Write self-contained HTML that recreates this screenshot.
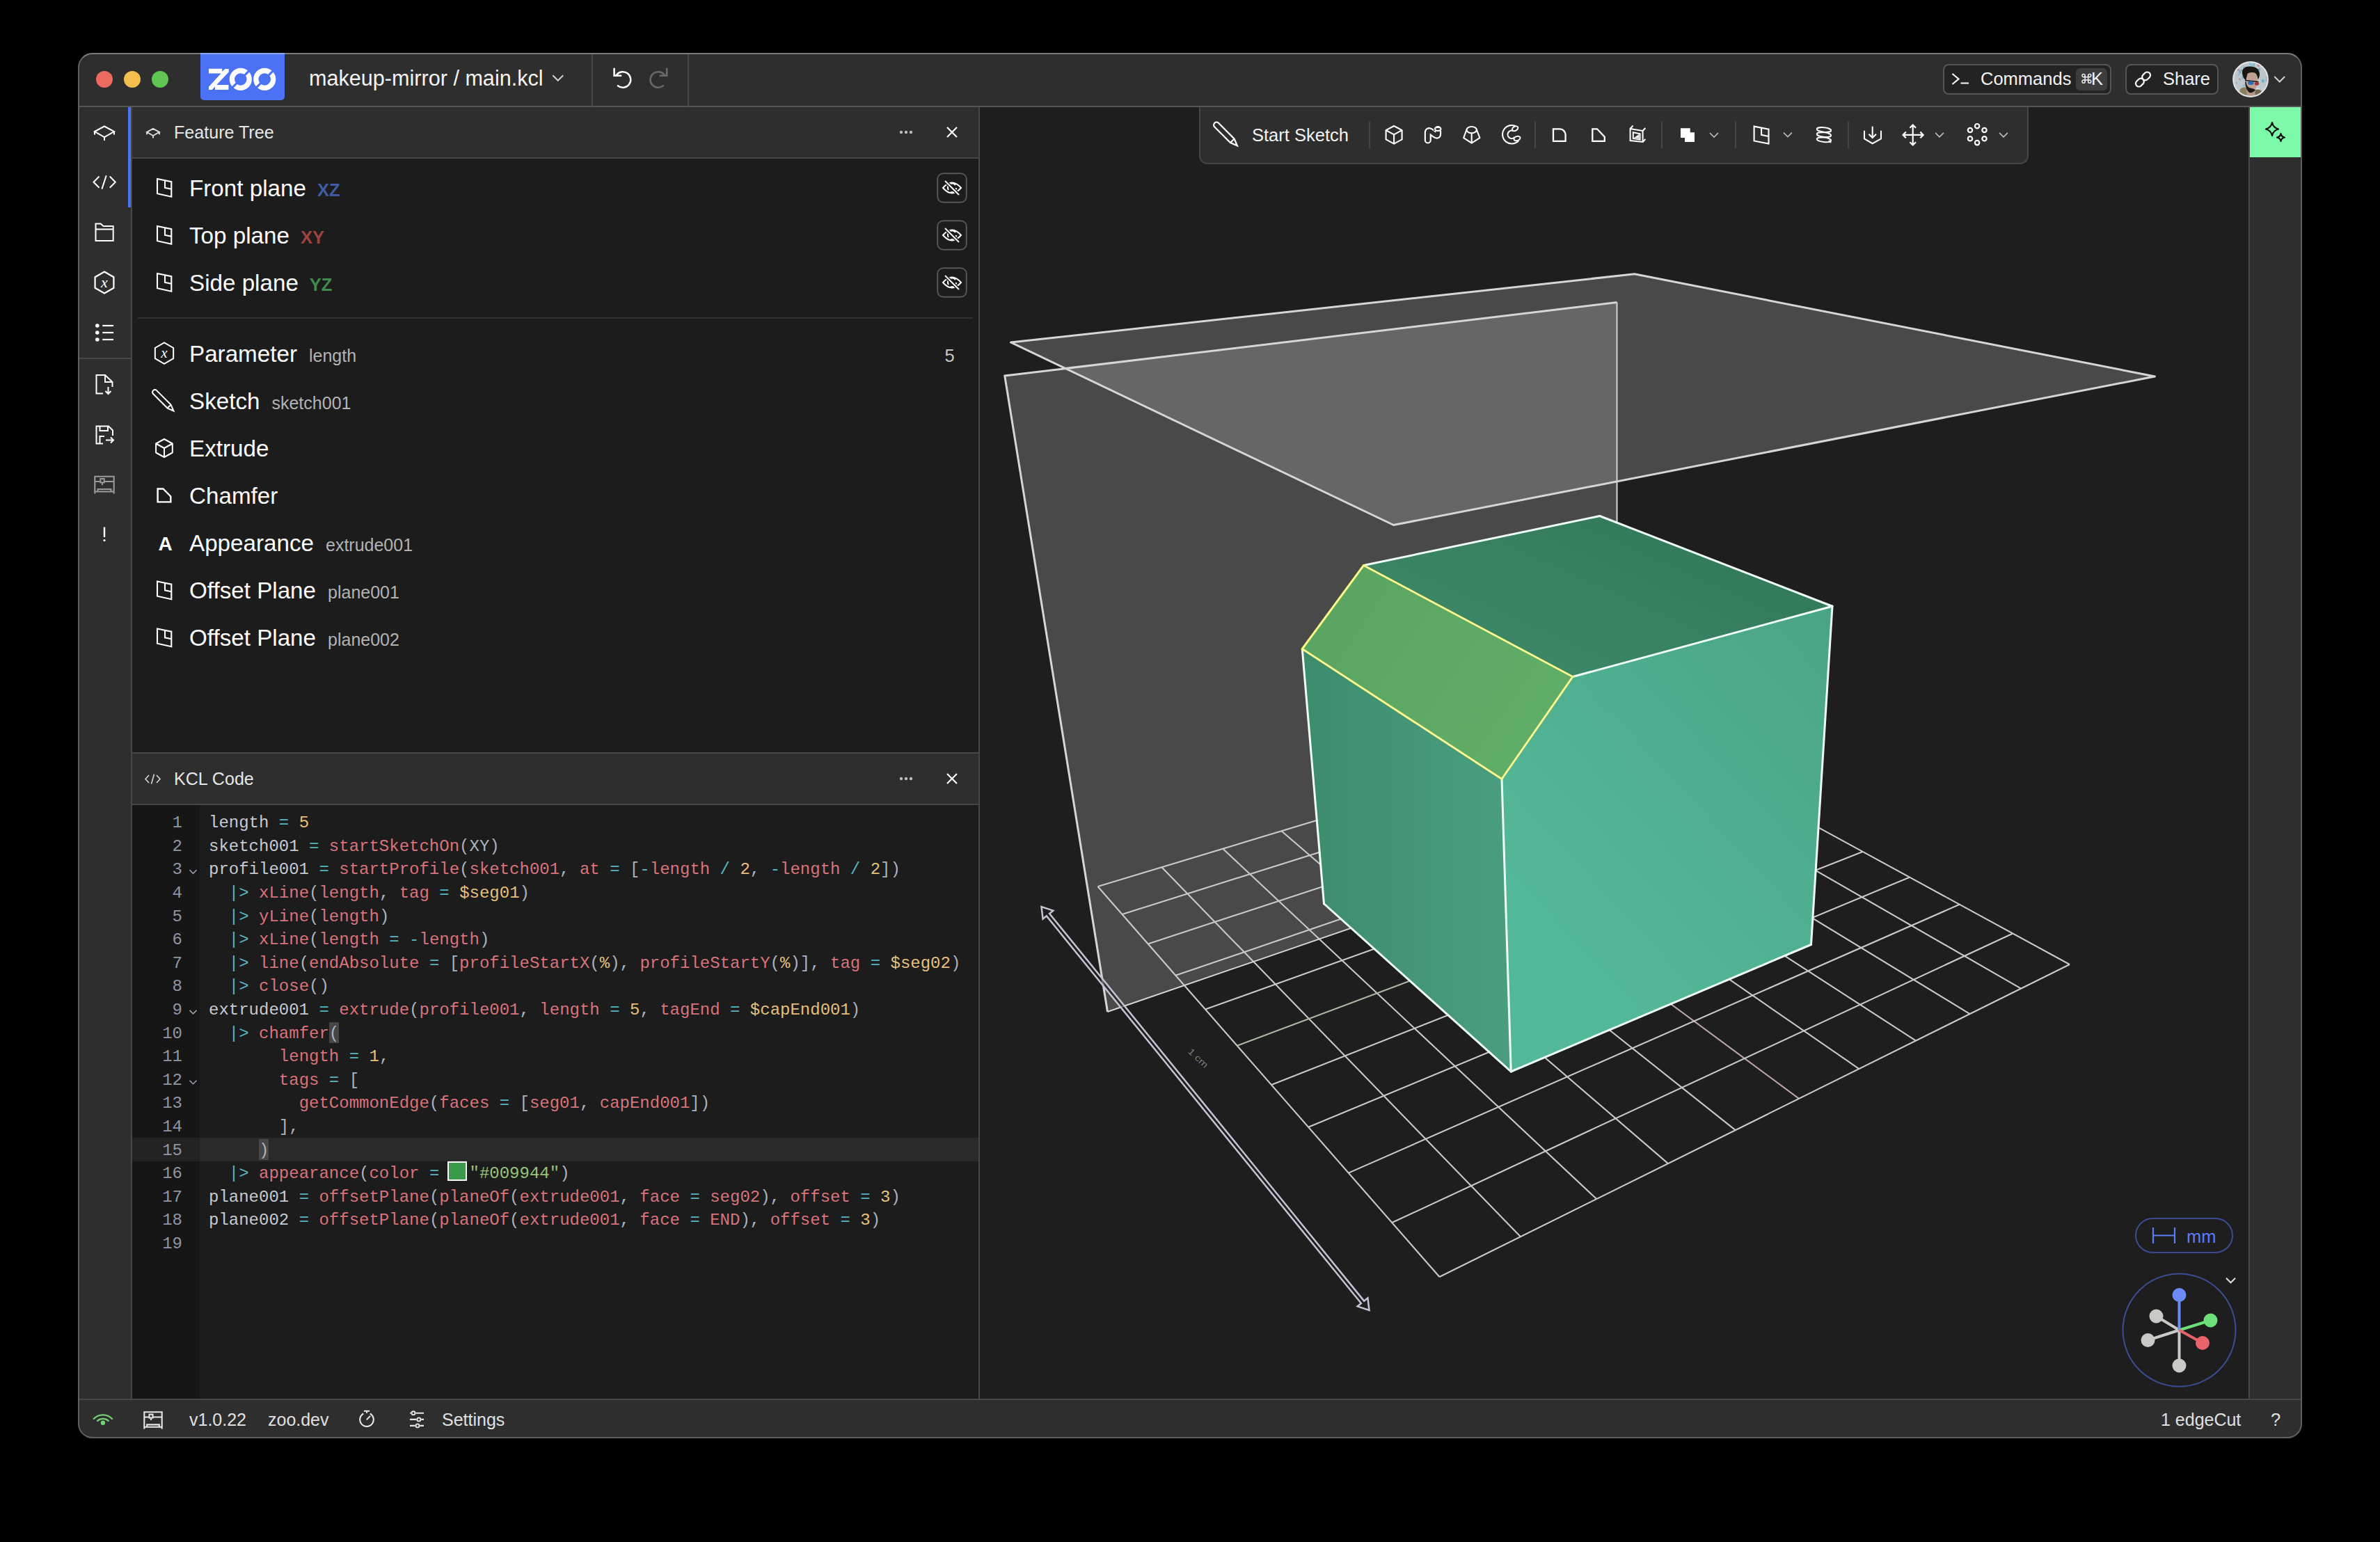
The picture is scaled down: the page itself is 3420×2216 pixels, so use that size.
<!DOCTYPE html><html><head><meta charset="utf-8"><style>
*{margin:0;padding:0;box-sizing:border-box}
html,body{width:3420px;height:2216px;background:#000;overflow:hidden}
body{position:relative;font-family:"Liberation Sans",sans-serif}
.t{position:absolute;white-space:pre}
.r{position:absolute}
svg{position:absolute;overflow:visible}
.ic{fill:none;stroke:#fff;stroke-width:2;stroke-linecap:butt;stroke-linejoin:miter}
</style></head><body><div class="r" style="left:112px;top:76px;width:3196px;height:1991px;border-radius:21px;overflow:hidden;background:#2e2e2e">
<div class="r" style="left:-112px;top:-76px;width:3420px;height:2216px">
<div class="r" style="left:112px;top:76px;width:3196px;height:77px;background:#2e2e2e;"></div>
<div class="r" style="left:112px;top:152px;width:3196px;height:2px;background:#555555;"></div>
<div class="r" style="left:138px;top:101.75px;width:24px;height:24px;border-radius:50%;background:#ec6a5e"></div>
<div class="r" style="left:178px;top:101.75px;width:24px;height:24px;border-radius:50%;background:#f4bf4f"></div>
<div class="r" style="left:218px;top:101.75px;width:24px;height:24px;border-radius:50%;background:#61c554"></div>
<div class="r" style="left:288px;top:76px;width:121px;height:68px;background:#4b71f5;border-radius:0 0 5px 5px"></div>
<svg style="left:0px;top:0px;width:3420px;height:2216px" width="3420" height="2216" viewBox="0 0 3420 2216"><polygon points="299.94,98.68 319.15,98.68 319.15,102.68 323.69,98.95 328.76,98.95 328.76,103.48 311.15,121.89 328.49,121.89 328.49,129.09 309.01,129.09 309.01,124.56 304.74,129.09 299.94,129.09 299.94,124.83 317.55,105.62 299.94,105.62" fill="#fcfcfc"/><circle cx="345.8" cy="113.9" r="12.4" fill="none" stroke="#fcfcfc" stroke-width="7.3"/><line x1="358.8" y1="100.9" x2="332.8" y2="126.9" stroke="#4b71f5" stroke-width="3"/><circle cx="380.25" cy="113.9" r="12.4" fill="none" stroke="#fcfcfc" stroke-width="7.3"/><line x1="393.25" y1="100.9" x2="367.25" y2="126.9" stroke="#4b71f5" stroke-width="3"/></svg>
<div class="t" style="left:444.00px;top:97.00px;font-size:30.6px;line-height:30.6px;color:#f4f4f4;">makeup-mirror / main.kcl</div>
<svg style="left:0px;top:0px;" width="10" height="10" viewBox="0 0 10 10"><polyline points="794.25,108.25 801.75,115.75 809.25,108.25" fill="none" stroke="#d0d0d0" stroke-width="2"/></svg>
<div class="r" style="left:850px;top:76px;width:2px;height:77px;background:#474747;"></div>
<div class="r" style="left:988px;top:76px;width:2px;height:77px;background:#474747;"></div>
<svg style="left:0px;top:0px;" width="10" height="10" viewBox="0 0 10 10"><path d="M882.6,97.8 L882.6,108.8 L893.2,108.8" fill="none" stroke="#fff" stroke-width="2.6"/><path d="M885.96,107.72 A11.3 11.3 0 1 1 887.89,123.28" fill="none" stroke="#fff" stroke-width="2.4" stroke-linecap="round"/><path d="M958.2,97.8 L958.2,108.8 L947.6,108.8" fill="none" stroke="#6a6a6a" stroke-width="2.6"/><path d="M954.84,107.72 A11.3 11.3 0 1 0 952.91,123.28" fill="none" stroke="#6a6a6a" stroke-width="2.4" stroke-linecap="round"/></svg>
<div class="r" style="left:2792px;top:92px;width:242px;height:44px;background:#232323;border:2px solid #555;border-radius:8px"></div>
<svg style="left:0px;top:0px;" width="10" height="10" viewBox="0 0 10 10"><polyline points="2805.5,106 2814.5,113.5 2805.5,121" fill="none" stroke="#fff" stroke-width="2.2"/><line x1="2817.5" y1="119.5" x2="2829" y2="119.5" stroke="#fff" stroke-width="2.2"/></svg>
<div class="t" style="left:2846.00px;top:101.31px;font-size:25.5px;line-height:25.5px;color:#f2f2f2;">Commands</div>
<div class="r" style="left:2983px;top:98px;width:45px;height:32px;background:#3d3d3d;border-radius:6px"></div>
<svg style="left:0px;top:0px;" width="10" height="10" viewBox="0 0 10 10"><path d="M2994.1000000000004,110.7 L3002.7,110.7 M2994.1000000000004,115.10000000000001 L3002.7,115.10000000000001 M2996.2000000000003,108.60000000000001 L2996.2000000000003,117.2 M3000.6,108.60000000000001 L3000.6,117.2" stroke="#e8e8e8" stroke-width="1.5" fill="none"/><circle cx="2994.10" cy="108.60" r="2.1" stroke="#e8e8e8" stroke-width="1.5" fill="none"/><circle cx="2994.10" cy="117.20" r="2.1" stroke="#e8e8e8" stroke-width="1.5" fill="none"/><circle cx="3002.70" cy="108.60" r="2.1" stroke="#e8e8e8" stroke-width="1.5" fill="none"/><circle cx="3002.70" cy="117.20" r="2.1" stroke="#e8e8e8" stroke-width="1.5" fill="none"/></svg>
<div class="t" style="left:3005.00px;top:101.31px;font-size:25.5px;line-height:25.5px;color:#f2f2f2;">K</div>
<div class="r" style="left:3054px;top:92px;width:134px;height:44px;background:#232323;border:2px solid #555;border-radius:8px"></div>
<svg style="left:0px;top:0px;" width="10" height="10" viewBox="0 0 10 10"><g transform="translate(3079.5,114) rotate(-45)" fill="none" stroke="#fff" stroke-width="2.2"><rect x="-13" y="-4.5" width="13" height="9" rx="4.5"/><rect x="0" y="-4.5" width="13" height="9" rx="4.5"/></g></svg>
<div class="t" style="left:3108.00px;top:101.31px;font-size:25.5px;line-height:25.5px;color:#f2f2f2;">Share</div>
<svg style="left:0px;top:0px;" width="10" height="10" viewBox="0 0 10 10"><defs><clipPath id="avc"><circle cx="3234" cy="114" r="24.8"/></clipPath></defs><g clip-path="url(#avc)"><rect x="3208" y="88" width="52" height="52" fill="#bcc6cd"/><rect x="3224.8" y="95.8" width="1.6" height="4.0" fill="#c46a6a" opacity="0.85"/><rect x="3212.9" y="118.3" width="2.1" height="1.8" fill="#9aa8b4" opacity="0.85"/><rect x="3229.7" y="100.5" width="2.8" height="4.0" fill="#9aa8b4" opacity="0.85"/><rect x="3214.4" y="99.6" width="3.2" height="1.7" fill="#c46a6a" opacity="0.85"/><rect x="3238.4" y="90.6" width="1.6" height="4.1" fill="#5aaac4" opacity="0.85"/><rect x="3223.1" y="95.5" width="3.2" height="3.2" fill="#76c0d4" opacity="0.85"/><rect x="3243.5" y="93.4" width="3.4" height="2.6" fill="#9aa8b4" opacity="0.85"/><rect x="3236.5" y="91.3" width="3.4" height="3.0" fill="#76c0d4" opacity="0.85"/><rect x="3235.6" y="128.4" width="3.3" height="2.9" fill="#e6eaee" opacity="0.85"/><rect x="3223.6" y="129.3" width="3.8" height="1.7" fill="#c46a6a" opacity="0.85"/><rect x="3223.6" y="113.7" width="3.7" height="2.4" fill="#c8d0d6" opacity="0.85"/><rect x="3259.0" y="94.1" width="2.0" height="2.5" fill="#e6eaee" opacity="0.85"/><rect x="3256.5" y="109.9" width="1.7" height="3.2" fill="#c46a6a" opacity="0.85"/><rect x="3249.0" y="130.6" width="3.6" height="3.3" fill="#c8d0d6" opacity="0.85"/><rect x="3238.2" y="111.7" width="1.8" height="2.3" fill="#7fc6d8" opacity="0.85"/><rect x="3244.2" y="91.4" width="3.6" height="3.4" fill="#c46a6a" opacity="0.85"/><rect x="3259.6" y="130.7" width="3.6" height="4.2" fill="#c8d0d6" opacity="0.85"/><rect x="3226.0" y="136.9" width="2.0" height="1.9" fill="#c8d0d6" opacity="0.85"/><rect x="3211.1" y="127.9" width="3.7" height="2.7" fill="#5aaac4" opacity="0.85"/><rect x="3255.7" y="113.8" width="2.8" height="3.1" fill="#5aaac4" opacity="0.85"/><rect x="3253.9" y="130.6" width="3.2" height="3.6" fill="#7fc6d8" opacity="0.85"/><rect x="3259.3" y="123.5" width="4.4" height="2.0" fill="#e6eaee" opacity="0.85"/><rect x="3217.2" y="100.1" width="1.5" height="4.0" fill="#5aaac4" opacity="0.85"/><rect x="3217.5" y="102.7" width="2.8" height="2.6" fill="#5aaac4" opacity="0.85"/><rect x="3237.4" y="137.6" width="4.1" height="4.4" fill="#c46a6a" opacity="0.85"/><rect x="3242.1" y="126.5" width="4.2" height="3.8" fill="#e6eaee" opacity="0.85"/><rect x="3253.5" y="129.5" width="2.7" height="2.7" fill="#e6eaee" opacity="0.85"/><rect x="3233.0" y="108.8" width="1.7" height="2.1" fill="#5aaac4" opacity="0.85"/><rect x="3216.4" y="105.7" width="1.8" height="3.2" fill="#76c0d4" opacity="0.85"/><rect x="3235.9" y="137.3" width="1.6" height="4.1" fill="#9aa8b4" opacity="0.85"/><rect x="3239.9" y="95.7" width="4.4" height="3.3" fill="#c8d0d6" opacity="0.85"/><rect x="3232.7" y="94.0" width="4.5" height="2.9" fill="#e6eaee" opacity="0.85"/><rect x="3233.2" y="92.5" width="3.7" height="3.7" fill="#76c0d4" opacity="0.85"/><rect x="3232.9" y="124.0" width="1.6" height="4.4" fill="#9aa8b4" opacity="0.85"/><rect x="3235.5" y="95.6" width="4.2" height="3.8" fill="#9aa8b4" opacity="0.85"/><rect x="3223.5" y="121.4" width="3.6" height="2.3" fill="#76c0d4" opacity="0.85"/><rect x="3227.1" y="96.7" width="2.2" height="3.1" fill="#7fc6d8" opacity="0.85"/><rect x="3234.1" y="121.1" width="3.9" height="4.5" fill="#9aa8b4" opacity="0.85"/><rect x="3252.3" y="129.9" width="2.7" height="3.9" fill="#7fc6d8" opacity="0.85"/><rect x="3218.4" y="113.6" width="1.6" height="1.6" fill="#c46a6a" opacity="0.85"/><rect x="3222.5" y="101.5" width="3.3" height="2.5" fill="#c46a6a" opacity="0.85"/><rect x="3250.0" y="125.6" width="4.4" height="2.6" fill="#c8d0d6" opacity="0.85"/><rect x="3219.5" y="99.8" width="2.5" height="2.9" fill="#5aaac4" opacity="0.85"/><rect x="3259.2" y="119.7" width="2.9" height="3.5" fill="#76c0d4" opacity="0.85"/><rect x="3249.6" y="92.4" width="1.9" height="2.7" fill="#c46a6a" opacity="0.85"/><rect x="3245.0" y="98.4" width="2.8" height="3.4" fill="#5aaac4" opacity="0.85"/><rect x="3212.5" y="137.2" width="2.7" height="2.7" fill="#c46a6a" opacity="0.85"/><rect x="3257.2" y="125.7" width="4.5" height="1.6" fill="#5aaac4" opacity="0.85"/><rect x="3238.7" y="112.2" width="1.9" height="4.0" fill="#c46a6a" opacity="0.85"/><rect x="3259.0" y="122.2" width="2.0" height="3.1" fill="#c8d0d6" opacity="0.85"/><rect x="3209.1" y="129.6" width="3.4" height="3.1" fill="#c46a6a" opacity="0.85"/><rect x="3256.5" y="110.6" width="2.1" height="4.1" fill="#7fc6d8" opacity="0.85"/><rect x="3209.5" y="99.1" width="2.2" height="3.3" fill="#9aa8b4" opacity="0.85"/><rect x="3221.5" y="109.8" width="1.7" height="3.7" fill="#5aaac4" opacity="0.85"/><rect x="3254.7" y="122.4" width="4.2" height="2.8" fill="#7fc6d8" opacity="0.85"/><rect x="3255.7" y="114.1" width="2.0" height="3.0" fill="#9aa8b4" opacity="0.85"/><rect x="3253.4" y="128.4" width="1.5" height="3.9" fill="#9aa8b4" opacity="0.85"/><rect x="3217.0" y="112.6" width="1.9" height="1.7" fill="#c46a6a" opacity="0.85"/><rect x="3243.5" y="115.6" width="3.9" height="1.8" fill="#e6eaee" opacity="0.85"/><rect x="3237.1" y="100.9" width="1.6" height="1.8" fill="#c8d0d6" opacity="0.85"/><rect x="3231.5" y="89.4" width="2.8" height="3.3" fill="#76c0d4" opacity="0.85"/><rect x="3234.3" y="114.6" width="2.3" height="3.0" fill="#c46a6a" opacity="0.85"/><rect x="3250.0" y="114.4" width="3.6" height="4.1" fill="#5aaac4" opacity="0.85"/><rect x="3257.0" y="101.5" width="4.2" height="2.1" fill="#9aa8b4" opacity="0.85"/><rect x="3231.3" y="109.7" width="2.8" height="1.7" fill="#e6eaee" opacity="0.85"/><rect x="3220.5" y="91.8" width="2.4" height="1.9" fill="#c46a6a" opacity="0.85"/><rect x="3248.4" y="136.9" width="3.5" height="1.9" fill="#c46a6a" opacity="0.85"/><rect x="3253.9" y="138.3" width="3.7" height="1.8" fill="#5aaac4" opacity="0.85"/><rect x="3254.0" y="96.5" width="4.0" height="2.0" fill="#c46a6a" opacity="0.85"/><rect x="3230.4" y="114.8" width="2.8" height="2.6" fill="#c8d0d6" opacity="0.85"/><path d="M3216,141 L3219,128 Q3224,124 3228,126 L3231,140 Z" fill="#8a8060"/><path d="M3238,140 L3241,129 Q3247,127 3251,132 L3254,141 Z" fill="#6f6a4c"/><path d="M3228,126 Q3234,131 3240,128 L3241,140 L3229,140 Z" fill="#b79888"/><path d="M3227,108 Q3228,100 3235,100 Q3243,101 3244,109 L3243.5,120 Q3242,131 3235,132 Q3228,131 3227,121 Z" fill="#c0a091"/><path d="M3222,106 Q3221,96 3232,95.5 Q3246,95 3247,106 Q3247,112 3244.5,114 Q3244,107 3240,104.5 Q3233,103 3229.5,106 Q3228,111 3227.5,116 Q3223,112 3222,106 Z" fill="#1a1614"/><path d="M3226,117 Q3226.5,128 3232,133 Q3237,134.5 3241,129 Q3238,127 3234,126.5 Q3229,126 3227.5,118 Z" fill="#1e1915"/><path d="M3226,115.5 L3245.5,117.5" stroke="#221c18" stroke-width="1.6"/><ellipse cx="3234.3" cy="119.3" rx="4.3" ry="2.7" fill="#2a6db8"/><ellipse cx="3243" cy="120.2" rx="3.2" ry="2.5" fill="#a8343a"/></g><circle cx="3234" cy="114" r="24.8" fill="none" stroke="#e0e2e4" stroke-width="2.2"/></svg>
<svg style="left:0px;top:0px;" width="10" height="10" viewBox="0 0 10 10"><polyline points="3268.25,110.0 3275.75,117.5 3283.25,110.0" fill="none" stroke="#d0d0d0" stroke-width="2"/></svg>
<div class="r" style="left:112px;top:154px;width:72px;height:1856px;background:#2e2e2e;"></div>
<div class="r" style="left:184px;top:154px;width:4px;height:144px;background:#4b71f5;"></div>
<div class="r" style="left:188px;top:154px;width:2px;height:1856px;background:#474747;"></div>
<div class="r" style="left:112px;top:514px;width:76px;height:2px;background:#474747;"></div>
<div class="r" style="left:190px;top:154px;width:1216px;height:73px;background:#2e2e2e;"></div>
<div class="r" style="left:190px;top:226px;width:1216px;height:2px;background:#474747;"></div>
<div class="r" style="left:190px;top:228px;width:1216px;height:853px;background:#1c1c1c;"></div>
<div class="r" style="left:198px;top:456px;width:1200px;height:2px;background:#333333;"></div>
<div class="r" style="left:1406px;top:154px;width:2px;height:1856px;background:#474747;"></div>
<div class="r" style="left:190px;top:1081px;width:1216px;height:2px;background:#474747;"></div>
<div class="r" style="left:190px;top:1083px;width:1216px;height:72px;background:#2e2e2e;"></div>
<div class="r" style="left:190px;top:1155px;width:1216px;height:2px;background:#474747;"></div>
<div class="r" style="left:190px;top:1157px;width:1216px;height:853px;background:#1c1c1c;"></div>
<div class="r" style="left:190px;top:1157px;width:97px;height:853px;background:#161616;"></div>
<div class="r" style="left:1408px;top:154px;width:1823px;height:1856px;background:#1e1e1e;"></div>
<div class="r" style="left:3231px;top:154px;width:2px;height:1856px;background:#474747;"></div>
<div class="r" style="left:3233px;top:154px;width:75px;height:1856px;background:#2e2e2e;"></div>
<div class="r" style="left:3233px;top:154px;width:75px;height:72px;background:#7cfaaa;"></div>
<div class="r" style="left:112px;top:2010px;width:3196px;height:2px;background:#474747;"></div>
<div class="r" style="left:112px;top:2012px;width:3196px;height:55px;background:#2e2e2e;"></div>
<svg style="left:0px;top:0px;" width="10" height="10" viewBox="0 0 10 10"><path d="M136,189 L150,181.5 L164,189 L150,197 Z M136,189 L136,193.5 M164,189 L164,193.5 M150,197 L150,202" class="ic" stroke-width="2.4"/><path d="M142.5,253.5 L134.5,261.7 L142.5,269.8 M157.8,253.5 L165.8,261.7 L157.8,269.8 M152.8,252.2 L146.4,271.6" class="ic" stroke-width="2.4"/><path d="M137.5,346 L137.5,321.5 L144.7,321.5 L148.5,325 L162.7,325 L162.7,346 Z M137.5,329.5 L162.7,329.5" class="ic" stroke-width="2.2"/><polygon points="150.00,390.50 163.42,398.25 163.42,413.75 150.00,421.50 136.58,413.75 136.58,398.25" fill="none" stroke="#fff" stroke-width="2.2"/><text x="150" y="413" font-family="Liberation Serif" font-style="italic" font-size="22" fill="#fff" text-anchor="middle">x</text><circle cx="139.8" cy="468" r="2.8" fill="#fff"/><line x1="147.3" y1="468" x2="163.1" y2="468" stroke="#fff" stroke-width="2.2"/><circle cx="139.8" cy="478" r="2.8" fill="#fff"/><line x1="147.3" y1="478" x2="163.1" y2="478" stroke="#fff" stroke-width="2.2"/><circle cx="139.8" cy="488" r="2.8" fill="#fff"/><line x1="147.3" y1="488" x2="163.1" y2="488" stroke="#fff" stroke-width="2.2"/><path d="M148,565.5 L138.5,565.5 L138.5,539 L151,539 L161.5,549 L161.5,556 M151,539 L151,549 L161.5,549 M155.5,556 L155.5,566 M151.5,562 L155.5,566 L159.5,562" class="ic" stroke-width="2.2"/><path d="M148,637.5 L138.5,637.5 L138.5,612.5 L156,612.5 L162,618.5 L162,626 M143.5,612.5 L143.5,619 L155,619 L155,612.5 M143.5,637.5 L143.5,627 L150,627 M152,632.5 L163,632.5 M159,628.5 L163,632.5 L159,636.5" class="ic" stroke-width="2.2"/><path d="M136.3,709.5 L136.3,684.8 L163.7,684.8 L163.7,709.5 M136.3,692 L163.7,692 M136.3,706.5 L163.7,706.5 M140.5,706.5 L140.5,703 L159.5,703 L159.5,706.5 M147,694 L147,697" fill="none" stroke="#9a9a9a" stroke-width="2.1"/><rect x="144.3" y="688" width="5.4" height="5.4" fill="#2e2e2e" stroke="#9a9a9a" stroke-width="2"/><line x1="150" y1="757.5" x2="150" y2="772" stroke="#fff" stroke-width="2.4"/><circle cx="150" cy="776.5" r="1.6" fill="#fff"/></svg>
<div class="t" style="left:250.00px;top:177.91px;font-size:25.09px;line-height:25.09px;color:#e6e6e6;">Feature Tree</div>
<div class="t" style="left:250.00px;top:1107.16px;font-size:25.09px;line-height:25.09px;color:#e6e6e6;">KCL Code</div>
<div class="t" style="left:272px;top:253.75px;font-size:33.2px;line-height:33.2px;color:#fff">Front plane<span style="font-size:25.5px;color:#3f5ca3;font-weight:bold;margin-left:16px">XZ</span></div>
<div class="t" style="left:272px;top:321.75px;font-size:33.2px;line-height:33.2px;color:#fff">Top plane<span style="font-size:25.5px;color:#a04040;font-weight:bold;margin-left:16px">XY</span></div>
<div class="t" style="left:272px;top:389.75px;font-size:33.2px;line-height:33.2px;color:#fff">Side plane<span style="font-size:25.5px;color:#3f8a4c;font-weight:bold;margin-left:16px">YZ</span></div>
<div class="t" style="left:272px;top:492.00px;font-size:33.2px;line-height:33.2px;color:#fff">Parameter<span style="font-size:25px;color:#b3b3b3;margin-left:17px">length</span></div>
<div class="t" style="left:272px;top:560.00px;font-size:33.2px;line-height:33.2px;color:#fff">Sketch<span style="font-size:25px;color:#b3b3b3;margin-left:17px">sketch001</span></div>
<div class="t" style="left:272px;top:628.00px;font-size:33.2px;line-height:33.2px;color:#fff">Extrude</div>
<div class="t" style="left:272px;top:695.50px;font-size:33.2px;line-height:33.2px;color:#fff">Chamfer</div>
<div class="t" style="left:272px;top:764.00px;font-size:33.2px;line-height:33.2px;color:#fff">Appearance<span style="font-size:25px;color:#b3b3b3;margin-left:17px">extrude001</span></div>
<div class="t" style="left:272px;top:832.00px;font-size:33.2px;line-height:33.2px;color:#fff">Offset Plane<span style="font-size:25px;color:#b3b3b3;margin-left:17px">plane001</span></div>
<div class="t" style="left:272px;top:900.00px;font-size:33.2px;line-height:33.2px;color:#fff">Offset Plane<span style="font-size:25px;color:#b3b3b3;margin-left:17px">plane002</span></div>
<div class="t" style="left:227.50px;top:767.56px;font-size:28.05px;line-height:28.05px;color:#fff;font-weight:bold">A</div>
<div class="t" style="left:1357.50px;top:498.81px;font-size:25.5px;line-height:25.5px;color:#c8c8c8;">5</div>
<svg style="left:0px;top:0px;" width="10" height="10" viewBox="0 0 10 10"><path d="M211,189.8 L220,184.8 L229,189.8 L220,195 Z M211,189.8 L211,193.2 M229,189.8 L229,193.2 M220,195 L220,198.5" fill="none" stroke="#dcdcdc" stroke-width="1.9"/><circle cx="1295" cy="190" r="2.2" fill="#bdbdbd"/><circle cx="1302" cy="190" r="2.2" fill="#bdbdbd"/><circle cx="1309" cy="190" r="2.2" fill="#bdbdbd"/><path d="M1361,183 L1375,197 M1375,183 L1361,197" stroke="#fff" stroke-width="2.2"/><path d="M214,1114 L209,1119.5 L214,1125 M225,1114 L230,1119.5 L225,1125 M221.5,1112.5 L217.5,1126.5" fill="none" stroke="#d8d8d8" stroke-width="1.6"/><circle cx="1295" cy="1119" r="2.2" fill="#bdbdbd"/><circle cx="1302" cy="1119" r="2.2" fill="#bdbdbd"/><circle cx="1309" cy="1119" r="2.2" fill="#bdbdbd"/><path d="M1361,1112 L1375,1126 M1375,1112 L1361,1126" stroke="#fff" stroke-width="2.2"/><path d="M226,257 L246.3,261.2 L246.3,282.7 L226,278.2 Z M237,259.3 L237,269.8 L246.3,271.7" fill="none" stroke="#fff" stroke-width="2.1" stroke-linejoin="miter"/><rect x="1347.25" y="249.25" width="41.5" height="41.5" rx="8" fill="none" stroke="#555" stroke-width="2"/><path d="M1355,270 Q1368,255 1381,270 Q1368,285 1355,270 Z" fill="none" stroke="#fff" stroke-width="2"/><path d="M1363,273 A6 6 0 0 1 1373,266" fill="none" stroke="#fff" stroke-width="2"/><path d="M1366,276 A6 6 0 0 0 1374,270" fill="none" stroke="#fff" stroke-width="2"/><line x1="1358" y1="260" x2="1378" y2="280" stroke="#1c1c1c" stroke-width="5"/><line x1="1358" y1="260" x2="1378" y2="280" stroke="#fff" stroke-width="2"/><path d="M226,325 L246.3,329.2 L246.3,350.7 L226,346.2 Z M237,327.3 L237,337.8 L246.3,339.7" fill="none" stroke="#fff" stroke-width="2.1" stroke-linejoin="miter"/><rect x="1347.25" y="317.25" width="41.5" height="41.5" rx="8" fill="none" stroke="#555" stroke-width="2"/><path d="M1355,338 Q1368,323 1381,338 Q1368,353 1355,338 Z" fill="none" stroke="#fff" stroke-width="2"/><path d="M1363,341 A6 6 0 0 1 1373,334" fill="none" stroke="#fff" stroke-width="2"/><path d="M1366,344 A6 6 0 0 0 1374,338" fill="none" stroke="#fff" stroke-width="2"/><line x1="1358" y1="328" x2="1378" y2="348" stroke="#1c1c1c" stroke-width="5"/><line x1="1358" y1="328" x2="1378" y2="348" stroke="#fff" stroke-width="2"/><path d="M226,393 L246.3,397.2 L246.3,418.7 L226,414.2 Z M237,395.3 L237,405.8 L246.3,407.7" fill="none" stroke="#fff" stroke-width="2.1" stroke-linejoin="miter"/><rect x="1347.25" y="385.25" width="41.5" height="41.5" rx="8" fill="none" stroke="#555" stroke-width="2"/><path d="M1355,406 Q1368,391 1381,406 Q1368,421 1355,406 Z" fill="none" stroke="#fff" stroke-width="2"/><path d="M1363,409 A6 6 0 0 1 1373,402" fill="none" stroke="#fff" stroke-width="2"/><path d="M1366,412 A6 6 0 0 0 1374,406" fill="none" stroke="#fff" stroke-width="2"/><line x1="1358" y1="396" x2="1378" y2="416" stroke="#1c1c1c" stroke-width="5"/><line x1="1358" y1="396" x2="1378" y2="416" stroke="#fff" stroke-width="2"/><polygon points="236.00,492.40 249.16,500.00 249.16,515.20 236.00,522.80 222.84,515.20 222.84,500.00" fill="none" stroke="#fff" stroke-width="2"/><text x="236" y="514" font-family="Liberation Serif" font-style="italic" font-size="21" fill="#fff" text-anchor="middle">x</text><g transform="translate(236,577) rotate(45)"><path d="M-19,-3.5 L10,-3.5 L19,0 L10,3.5 L-19,3.5 A3.5 3.5 0 0 1 -19,-3.5 Z M10,-3.5 L10,3.5" fill="none" stroke="#fff" stroke-width="2"/></g><path d="M236,631 L247.8,637.5 L247.8,650.5 L236,657 L224.1,650.5 L224.1,637.5 Z M224.1,637.5 L236,644 L247.8,637.5 M236,644 L236,657" fill="none" stroke="#fff" stroke-width="2" stroke-linejoin="round"/><path d="M226.6,702.5 L234.5,702.5 L245.3,713.5 L245.3,721.4 L226.6,721.4 Z" fill="none" stroke="#fff" stroke-width="2.4"/><path d="M226,835.5 L246.3,839.7 L246.3,861.2 L226,856.7 Z M237,837.8 L237,848.3 L246.3,850.2" fill="none" stroke="#fff" stroke-width="2.1" stroke-linejoin="miter"/><path d="M226,903.5 L246.3,907.7 L246.3,929.2 L226,924.7 Z M237,905.8 L237,916.3 L246.3,918.2" fill="none" stroke="#fff" stroke-width="2.1" stroke-linejoin="miter"/></svg>
<div class="r" style="left:190px;top:1635px;width:97px;height:34px;background:#222222;"></div>
<div class="r" style="left:287px;top:1635px;width:1119px;height:34px;background:#2a2a2a;"></div>
<div class="r" style="left:472.8px;top:1468.5px;width:14.4px;height:30px;background:#464646;"></div>
<div class="r" style="left:372px;top:1636.5px;width:14.4px;height:30px;background:#464646;"></div>
<div class="r" style="left:643px;top:1669px;width:28px;height:28px;background:#3a9a4a;border:2px solid #fff"></div>
<div class="t" style="left:300px;top:1171.10px;font-family:'Liberation Mono', monospace;font-size:24px;line-height:24px"><span style="color:#c5cad3">length</span> <span style="color:#56b6c2">=</span> <span style="color:#e5c07b">5</span></div>
<div class="t" style="left:247.6px;top:1171.10px;font-family:'Liberation Mono', monospace;font-size:24px;line-height:24px;color:#8e95a4">1</div>
<div class="t" style="left:300px;top:1204.70px;font-family:'Liberation Mono', monospace;font-size:24px;line-height:24px"><span style="color:#c5cad3">sketch001</span> <span style="color:#56b6c2">=</span> <span style="color:#d9737b">startSketchOn</span><span style="color:#abb2bf">(</span><span style="color:#abb2bf">XY</span><span style="color:#abb2bf">)</span></div>
<div class="t" style="left:247.6px;top:1204.70px;font-family:'Liberation Mono', monospace;font-size:24px;line-height:24px;color:#8e95a4">2</div>
<div class="t" style="left:300px;top:1238.30px;font-family:'Liberation Mono', monospace;font-size:24px;line-height:24px"><span style="color:#c5cad3">profile001</span> <span style="color:#56b6c2">=</span> <span style="color:#d9737b">startProfile</span><span style="color:#abb2bf">(</span><span style="color:#d9737b">sketch001</span><span style="color:#abb2bf">,</span> <span style="color:#d9737b">at</span> <span style="color:#56b6c2">=</span> <span style="color:#abb2bf">[</span><span style="color:#56b6c2">-</span><span style="color:#d9737b">length</span> <span style="color:#56b6c2">/</span> <span style="color:#e5c07b">2</span><span style="color:#abb2bf">,</span> <span style="color:#56b6c2">-</span><span style="color:#d9737b">length</span> <span style="color:#56b6c2">/</span> <span style="color:#e5c07b">2</span><span style="color:#abb2bf">]</span><span style="color:#abb2bf">)</span></div>
<div class="t" style="left:247.6px;top:1238.30px;font-family:'Liberation Mono', monospace;font-size:24px;line-height:24px;color:#8e95a4">3</div>
<div class="t" style="left:300px;top:1271.90px;font-family:'Liberation Mono', monospace;font-size:24px;line-height:24px">  <span style="color:#56b6c2">|&gt;</span> <span style="color:#d9737b">xLine</span><span style="color:#abb2bf">(</span><span style="color:#d9737b">length</span><span style="color:#abb2bf">,</span> <span style="color:#d9737b">tag</span> <span style="color:#56b6c2">=</span> <span style="color:#e5c07b">$seg01</span><span style="color:#abb2bf">)</span></div>
<div class="t" style="left:247.6px;top:1271.90px;font-family:'Liberation Mono', monospace;font-size:24px;line-height:24px;color:#8e95a4">4</div>
<div class="t" style="left:300px;top:1305.50px;font-family:'Liberation Mono', monospace;font-size:24px;line-height:24px">  <span style="color:#56b6c2">|&gt;</span> <span style="color:#d9737b">yLine</span><span style="color:#abb2bf">(</span><span style="color:#d9737b">length</span><span style="color:#abb2bf">)</span></div>
<div class="t" style="left:247.6px;top:1305.50px;font-family:'Liberation Mono', monospace;font-size:24px;line-height:24px;color:#8e95a4">5</div>
<div class="t" style="left:300px;top:1339.10px;font-family:'Liberation Mono', monospace;font-size:24px;line-height:24px">  <span style="color:#56b6c2">|&gt;</span> <span style="color:#d9737b">xLine</span><span style="color:#abb2bf">(</span><span style="color:#d9737b">length</span> <span style="color:#56b6c2">=</span> <span style="color:#56b6c2">-</span><span style="color:#d9737b">length</span><span style="color:#abb2bf">)</span></div>
<div class="t" style="left:247.6px;top:1339.10px;font-family:'Liberation Mono', monospace;font-size:24px;line-height:24px;color:#8e95a4">6</div>
<div class="t" style="left:300px;top:1372.70px;font-family:'Liberation Mono', monospace;font-size:24px;line-height:24px">  <span style="color:#56b6c2">|&gt;</span> <span style="color:#d9737b">line</span><span style="color:#abb2bf">(</span><span style="color:#d9737b">endAbsolute</span> <span style="color:#56b6c2">=</span> <span style="color:#abb2bf">[</span><span style="color:#d9737b">profileStartX</span><span style="color:#abb2bf">(</span><span style="color:#e5c07b">%</span><span style="color:#abb2bf">)</span><span style="color:#abb2bf">,</span> <span style="color:#d9737b">profileStartY</span><span style="color:#abb2bf">(</span><span style="color:#e5c07b">%</span><span style="color:#abb2bf">)</span><span style="color:#abb2bf">]</span><span style="color:#abb2bf">,</span> <span style="color:#d9737b">tag</span> <span style="color:#56b6c2">=</span> <span style="color:#e5c07b">$seg02</span><span style="color:#abb2bf">)</span></div>
<div class="t" style="left:247.6px;top:1372.70px;font-family:'Liberation Mono', monospace;font-size:24px;line-height:24px;color:#8e95a4">7</div>
<div class="t" style="left:300px;top:1406.30px;font-family:'Liberation Mono', monospace;font-size:24px;line-height:24px">  <span style="color:#56b6c2">|&gt;</span> <span style="color:#d9737b">close</span><span style="color:#abb2bf">(</span><span style="color:#abb2bf">)</span></div>
<div class="t" style="left:247.6px;top:1406.30px;font-family:'Liberation Mono', monospace;font-size:24px;line-height:24px;color:#8e95a4">8</div>
<div class="t" style="left:300px;top:1439.90px;font-family:'Liberation Mono', monospace;font-size:24px;line-height:24px"><span style="color:#c5cad3">extrude001</span> <span style="color:#56b6c2">=</span> <span style="color:#d9737b">extrude</span><span style="color:#abb2bf">(</span><span style="color:#d9737b">profile001</span><span style="color:#abb2bf">,</span> <span style="color:#d9737b">length</span> <span style="color:#56b6c2">=</span> <span style="color:#e5c07b">5</span><span style="color:#abb2bf">,</span> <span style="color:#d9737b">tagEnd</span> <span style="color:#56b6c2">=</span> <span style="color:#e5c07b">$capEnd001</span><span style="color:#abb2bf">)</span></div>
<div class="t" style="left:247.6px;top:1439.90px;font-family:'Liberation Mono', monospace;font-size:24px;line-height:24px;color:#8e95a4">9</div>
<div class="t" style="left:300px;top:1473.50px;font-family:'Liberation Mono', monospace;font-size:24px;line-height:24px">  <span style="color:#56b6c2">|&gt;</span> <span style="color:#d9737b">chamfer</span><span style="color:#abb2bf">(</span></div>
<div class="t" style="left:233.2px;top:1473.50px;font-family:'Liberation Mono', monospace;font-size:24px;line-height:24px;color:#8e95a4">10</div>
<div class="t" style="left:300px;top:1507.10px;font-family:'Liberation Mono', monospace;font-size:24px;line-height:24px">       <span style="color:#d9737b">length</span> <span style="color:#56b6c2">=</span> <span style="color:#e5c07b">1</span><span style="color:#abb2bf">,</span></div>
<div class="t" style="left:233.2px;top:1507.10px;font-family:'Liberation Mono', monospace;font-size:24px;line-height:24px;color:#8e95a4">11</div>
<div class="t" style="left:300px;top:1540.70px;font-family:'Liberation Mono', monospace;font-size:24px;line-height:24px">       <span style="color:#d9737b">tags</span> <span style="color:#56b6c2">=</span> <span style="color:#abb2bf">[</span></div>
<div class="t" style="left:233.2px;top:1540.70px;font-family:'Liberation Mono', monospace;font-size:24px;line-height:24px;color:#8e95a4">12</div>
<div class="t" style="left:300px;top:1574.30px;font-family:'Liberation Mono', monospace;font-size:24px;line-height:24px">         <span style="color:#d9737b">getCommonEdge</span><span style="color:#abb2bf">(</span><span style="color:#d9737b">faces</span> <span style="color:#56b6c2">=</span> <span style="color:#abb2bf">[</span><span style="color:#d9737b">seg01</span><span style="color:#abb2bf">,</span> <span style="color:#d9737b">capEnd001</span><span style="color:#abb2bf">]</span><span style="color:#abb2bf">)</span></div>
<div class="t" style="left:233.2px;top:1574.30px;font-family:'Liberation Mono', monospace;font-size:24px;line-height:24px;color:#8e95a4">13</div>
<div class="t" style="left:300px;top:1607.90px;font-family:'Liberation Mono', monospace;font-size:24px;line-height:24px">       <span style="color:#abb2bf">]</span><span style="color:#abb2bf">,</span></div>
<div class="t" style="left:233.2px;top:1607.90px;font-family:'Liberation Mono', monospace;font-size:24px;line-height:24px;color:#8e95a4">14</div>
<div class="t" style="left:300px;top:1641.50px;font-family:'Liberation Mono', monospace;font-size:24px;line-height:24px">     <span style="color:#abb2bf">)</span></div>
<div class="t" style="left:233.2px;top:1641.50px;font-family:'Liberation Mono', monospace;font-size:24px;line-height:24px;color:#8e95a4">15</div>
<div class="t" style="left:300px;top:1675.10px;font-family:'Liberation Mono', monospace;font-size:24px;line-height:24px">  <span style="color:#56b6c2">|&gt;</span> <span style="color:#d9737b">appearance</span><span style="color:#abb2bf">(</span><span style="color:#d9737b">color</span> <span style="color:#56b6c2">=</span> <span style="display:inline-block;width:28.8px;height:10px"></span><span style="color:#98c379">"#009944"</span><span style="color:#abb2bf">)</span></div>
<div class="t" style="left:233.2px;top:1675.10px;font-family:'Liberation Mono', monospace;font-size:24px;line-height:24px;color:#8e95a4">16</div>
<div class="t" style="left:300px;top:1708.70px;font-family:'Liberation Mono', monospace;font-size:24px;line-height:24px"><span style="color:#c5cad3">plane001</span> <span style="color:#56b6c2">=</span> <span style="color:#d9737b">offsetPlane</span><span style="color:#abb2bf">(</span><span style="color:#d9737b">planeOf</span><span style="color:#abb2bf">(</span><span style="color:#d9737b">extrude001</span><span style="color:#abb2bf">,</span> <span style="color:#d9737b">face</span> <span style="color:#56b6c2">=</span> <span style="color:#d9737b">seg02</span><span style="color:#abb2bf">)</span><span style="color:#abb2bf">,</span> <span style="color:#d9737b">offset</span> <span style="color:#56b6c2">=</span> <span style="color:#e5c07b">3</span><span style="color:#abb2bf">)</span></div>
<div class="t" style="left:233.2px;top:1708.70px;font-family:'Liberation Mono', monospace;font-size:24px;line-height:24px;color:#8e95a4">17</div>
<div class="t" style="left:300px;top:1742.30px;font-family:'Liberation Mono', monospace;font-size:24px;line-height:24px"><span style="color:#c5cad3">plane002</span> <span style="color:#56b6c2">=</span> <span style="color:#d9737b">offsetPlane</span><span style="color:#abb2bf">(</span><span style="color:#d9737b">planeOf</span><span style="color:#abb2bf">(</span><span style="color:#d9737b">extrude001</span><span style="color:#abb2bf">,</span> <span style="color:#d9737b">face</span> <span style="color:#56b6c2">=</span> <span style="color:#d9737b">END</span><span style="color:#abb2bf">)</span><span style="color:#abb2bf">,</span> <span style="color:#d9737b">offset</span> <span style="color:#56b6c2">=</span> <span style="color:#e5c07b">3</span><span style="color:#abb2bf">)</span></div>
<div class="t" style="left:233.2px;top:1742.30px;font-family:'Liberation Mono', monospace;font-size:24px;line-height:24px;color:#8e95a4">18</div>
<div class="t" style="left:300px;top:1775.90px;font-family:'Liberation Mono', monospace;font-size:24px;line-height:24px"></div>
<div class="t" style="left:233.2px;top:1775.90px;font-family:'Liberation Mono', monospace;font-size:24px;line-height:24px;color:#8e95a4">19</div>
<svg style="left:0px;top:0px;" width="10" height="10" viewBox="0 0 10 10"><polyline points="272.5,1250.3 277.5,1255.3 282.5,1250.3" fill="none" stroke="#9aa0aa" stroke-width="1.6"/><polyline points="272.5,1451.8999999999999 277.5,1456.8999999999999 282.5,1451.8999999999999" fill="none" stroke="#9aa0aa" stroke-width="1.6"/><polyline points="272.5,1552.6999999999998 277.5,1557.6999999999998 282.5,1552.6999999999998" fill="none" stroke="#9aa0aa" stroke-width="1.6"/></svg>
<svg style="left:0px;top:0px;" width="10" height="10" viewBox="0 0 10 10"><defs><clipPath id="vp"><rect x="1408" y="154" width="1823" height="1856"/></clipPath><linearGradient id="gTop" x1="2298" y1="742" x2="2200" y2="960" gradientUnits="userSpaceOnUse"><stop offset="0" stop-color="#347b5c"/><stop offset="1" stop-color="#3c8767"/></linearGradient><linearGradient id="gLeft" x1="1880" y1="1100" x2="2165" y2="1100" gradientUnits="userSpaceOnUse"><stop offset="0" stop-color="#3d8d6d"/><stop offset="1" stop-color="#4a9e7f"/></linearGradient><linearGradient id="gRight" x1="2200" y1="1300" x2="2630" y2="900" gradientUnits="userSpaceOnUse"><stop offset="0" stop-color="#53b899"/><stop offset="1" stop-color="#4aa586"/></linearGradient><linearGradient id="gCh" x1="1900" y1="850" x2="2200" y2="1050" gradientUnits="userSpaceOnUse"><stop offset="0" stop-color="#5aa461"/><stop offset="1" stop-color="#60ad68"/></linearGradient></defs><g clip-path="url(#vp)"><polygon points="1443.75,540.00 2323.50,434.50 2323.50,1202.60 1591.50,1454.00" fill="#a2a2a2" fill-opacity="0.326"/><polygon points="1452.50,492.00 2348.75,393.75 3096.50,541.00 2002.50,754.50" fill="#a2a2a2" fill-opacity="0.326"/><line x1="1577.50" y1="1274.00" x2="2343.77" y2="1042.45" stroke="#c9c9c9" stroke-width="2.1"/><line x1="1577.50" y1="1274.00" x2="2068.50" y2="1835.00" stroke="#c9c9c9" stroke-width="2.1"/><line x1="1612.41" y1="1313.88" x2="2392.02" y2="1068.75" stroke="#c9c9c9" stroke-width="2.1"/><line x1="1669.38" y1="1246.24" x2="2184.96" y2="1777.25" stroke="#c9c9c9" stroke-width="2.1"/><line x1="1649.63" y1="1356.41" x2="2442.86" y2="1096.46" stroke="#c9c9c9" stroke-width="2.1"/><line x1="1757.29" y1="1219.67" x2="2294.25" y2="1723.06" stroke="#c9c9c9" stroke-width="2.1"/><line x1="1689.41" y1="1401.86" x2="2496.48" y2="1125.70" stroke="#c9c9c9" stroke-width="2.1"/><line x1="1841.47" y1="1194.23" x2="2397.00" y2="1672.11" stroke="#c9c9c9" stroke-width="2.1"/><line x1="1732.01" y1="1450.54" x2="2553.14" y2="1156.58" stroke="#c9c9c9" stroke-width="2.1"/><line x1="1922.16" y1="1169.85" x2="2493.79" y2="1624.12" stroke="#c9c9c9" stroke-width="2.1"/><line x1="1777.76" y1="1502.81" x2="2613.09" y2="1189.26" stroke="#a9b7a3" stroke-width="2.1"/><line x1="1999.57" y1="1146.46" x2="2585.11" y2="1578.83" stroke="#bba5a8" stroke-width="2.1"/><line x1="1827.01" y1="1559.08" x2="2676.62" y2="1223.90" stroke="#c9c9c9" stroke-width="2.1"/><line x1="2073.89" y1="1124.00" x2="2671.42" y2="1536.03" stroke="#c9c9c9" stroke-width="2.1"/><line x1="1880.17" y1="1619.82" x2="2744.09" y2="1260.67" stroke="#c9c9c9" stroke-width="2.1"/><line x1="2145.31" y1="1102.42" x2="2753.13" y2="1495.52" stroke="#c9c9c9" stroke-width="2.1"/><line x1="1937.75" y1="1685.61" x2="2815.84" y2="1299.79" stroke="#c9c9c9" stroke-width="2.1"/><line x1="2214.00" y1="1081.66" x2="2830.58" y2="1457.12" stroke="#c9c9c9" stroke-width="2.1"/><line x1="2000.30" y1="1757.07" x2="2892.32" y2="1341.47" stroke="#c9c9c9" stroke-width="2.1"/><line x1="2280.10" y1="1061.69" x2="2904.11" y2="1420.66" stroke="#c9c9c9" stroke-width="2.1"/><line x1="2068.50" y1="1835.00" x2="2974.00" y2="1386.00" stroke="#c9c9c9" stroke-width="2.1"/><line x1="2343.77" y1="1042.45" x2="2974.00" y2="1386.00" stroke="#c9c9c9" stroke-width="2.1"/><polyline points="1591.50,1454.00 1443.75,540.00 2323.50,434.50" fill="none" stroke="#d6d6d6" stroke-width="3" stroke-linejoin="round"/><line x1="2323.5" y1="434.5" x2="2323.5" y2="1202.6" stroke="#c8c8c8" stroke-width="2.2"/><line x1="1591.5" y1="1454" x2="2323.5" y2="1202.6" stroke="#d6d6d6" stroke-width="2"/><polygon points="1452.50,492.00 2348.75,393.75 3096.50,541.00 2002.50,754.50" fill="none" stroke="#d6d6d6" stroke-width="3" stroke-linejoin="round"/><polygon points="1959.50,812.50 2298.75,741.50 2633.00,871.25 2260.00,972.50" fill="url(#gTop)"/><polygon points="1871.25,932.50 2158.00,1119.50 2171.25,1540.00 1902.50,1298.75" fill="url(#gLeft)"/><polygon points="2260.00,972.50 2633.00,871.25 2602.50,1357.50 2171.25,1540.00 2158.00,1119.50" fill="url(#gRight)"/><polygon points="1959.50,812.50 1871.25,932.50 2158.00,1119.50 2260.00,972.50" fill="url(#gCh)"/><line x1="1959.5" y1="812.5" x2="2298.75" y2="741.5" stroke="#effff7" stroke-width="3" stroke-linecap="round"/><line x1="2298.75" y1="741.5" x2="2633" y2="871.25" stroke="#effff7" stroke-width="3" stroke-linecap="round"/><line x1="2633" y1="871.25" x2="2260" y2="972.5" stroke="#effff7" stroke-width="3" stroke-linecap="round"/><line x1="2633" y1="871.25" x2="2602.5" y2="1357.5" stroke="#effff7" stroke-width="3" stroke-linecap="round"/><line x1="2602.5" y1="1357.5" x2="2171.25" y2="1540" stroke="#effff7" stroke-width="3" stroke-linecap="round"/><line x1="2171.25" y1="1540" x2="1902.5" y2="1298.75" stroke="#effff7" stroke-width="3" stroke-linecap="round"/><line x1="1902.5" y1="1298.75" x2="1871.25" y2="932.5" stroke="#effff7" stroke-width="3" stroke-linecap="round"/><line x1="2158" y1="1119.5" x2="2171.25" y2="1540" stroke="#effff7" stroke-width="3" stroke-linecap="round"/><line x1="1959.5" y1="812.5" x2="1871.25" y2="932.5" stroke="#f3f55a" stroke-width="3" stroke-linecap="round"/><line x1="1959.5" y1="812.5" x2="1871.25" y2="932.5" stroke="#ffffd0" stroke-width="1.2"/><line x1="1871.25" y1="932.5" x2="2158" y2="1119.5" stroke="#f3f55a" stroke-width="3" stroke-linecap="round"/><line x1="1871.25" y1="932.5" x2="2158" y2="1119.5" stroke="#ffffd0" stroke-width="1.2"/><line x1="2158" y1="1119.5" x2="2260" y2="972.5" stroke="#f3f55a" stroke-width="3" stroke-linecap="round"/><line x1="2158" y1="1119.5" x2="2260" y2="972.5" stroke="#ffffd0" stroke-width="1.2"/><line x1="2260" y1="972.5" x2="1959.5" y2="812.5" stroke="#f3f55a" stroke-width="3" stroke-linecap="round"/><line x1="2260" y1="972.5" x2="1959.5" y2="812.5" stroke="#ffffd0" stroke-width="1.2"/><polygon points="1496.50,1303.00 1498.58,1320.63 1503.86,1316.35 1955.95,1873.06 1950.67,1877.34 1967.50,1883.00 1965.42,1865.37 1960.14,1869.65 1508.05,1312.94 1513.33,1308.66" fill="#1e1e1e" fill-opacity="0.6" stroke="#c5c3d2" stroke-width="2.5" stroke-linejoin="miter"/><text x="0" y="0" transform="translate(1706,1512) rotate(42.9) scale(1,0.8)" font-family="Liberation Sans" font-size="16" fill="#7c7c7c">1 cm</text></g></svg>
<div class="r" style="left:1723px;top:154px;width:1192px;height:82px;background:#2e2e2e;border:2px solid #454545;border-top:none;border-radius:0 0 12px 12px"></div>
<div class="t" style="left:1799.00px;top:181.81px;font-size:25.5px;line-height:25.5px;color:#f2f2f2;">Start Sketch</div>
<svg style="left:0px;top:0px;" width="10" height="10" viewBox="0 0 10 10"><g transform="translate(1763,194.5) rotate(45)"><path d="M-21,-4 L11,-4 L21,0 L11,4 L-21,4 A4 4 0 0 1 -21,-4 Z M11,-4 L11,4" fill="none" stroke="#fff" stroke-width="2.2"/></g><line x1="1968" y1="174.5" x2="1968" y2="213.5" stroke="#454545" stroke-width="2"/><line x1="2206" y1="174.5" x2="2206" y2="213.5" stroke="#454545" stroke-width="2"/><line x1="2388" y1="174.5" x2="2388" y2="213.5" stroke="#454545" stroke-width="2"/><line x1="2494" y1="174.5" x2="2494" y2="213.5" stroke="#454545" stroke-width="2"/><line x1="2656" y1="174.5" x2="2656" y2="213.5" stroke="#454545" stroke-width="2"/><path d="M2003.1,181 L2014.6,187.2 L2014.6,200.4 L2003.1,206.6 L1991.6,200.4 L1991.6,187.2 Z M1991.6,187.2 L2003.1,193.4 L2014.6,187.2 M2003.1,193.4 L2003.1,206.6" fill="none" stroke="#fff" stroke-width="2.1" stroke-linejoin="round"/><path d="M2051.8,201.5 L2051.8,191 Q2051.8,186.5 2056,189 L2062,193.5 Q2066.2,196.5 2066.2,192 L2066.2,186" fill="none" stroke="#fff" stroke-width="10" stroke-linecap="round" stroke-linejoin="round"/><path d="M2051.8,201.5 L2051.8,191 Q2051.8,186.5 2056,189 L2062,193.5 Q2066.2,196.5 2066.2,192 L2066.2,186" fill="none" stroke="#2e2e2e" stroke-width="5.8" stroke-linecap="round" stroke-linejoin="round"/><rect x="2060" y="184" width="12.5" height="4" fill="#2e2e2e"/><ellipse cx="2066.2" cy="185.5" rx="4.3" ry="2.4" fill="#2e2e2e" stroke="#fff" stroke-width="2"/><path d="M2107.6,186 L2103.2,198.2 L2114.7,205.7 L2126.4,198.2 L2121.8,186 M2114.7,191.5 L2114.7,205.7" fill="none" stroke="#fff" stroke-width="2.1" stroke-linejoin="round"/><ellipse cx="2114.7" cy="186.6" rx="7.2" ry="4.6" fill="none" stroke="#fff" stroke-width="2.1"/><path d="M2177,185 A9.5 9.5 0 1 0 2179.5,199.5" fill="none" stroke="#fff" stroke-width="9.6"/><path d="M2177,185 A9.5 9.5 0 1 0 2179.5,199.5" fill="none" stroke="#2e2e2e" stroke-width="5.4"/><ellipse cx="2177.2" cy="184.8" rx="4.4" ry="3" transform="rotate(-30 2177.2 184.8)" fill="#2e2e2e" stroke="#fff" stroke-width="2"/><ellipse cx="2180" cy="199" rx="4.6" ry="3" transform="rotate(-20 2180 199)" fill="#2e2e2e" stroke="#fff" stroke-width="2"/><path d="M2232,185.3 L2241.6,185.3 A8.4 8.4 0 0 1 2249.6,193.5 L2249.6,202.9 L2232,202.9 Z" fill="none" stroke="#fff" stroke-width="2.3"/><path d="M2288.3,185.3 L2295,185.3 L2305.8,196.6 L2305.8,202.9 L2288.3,202.9 Z" fill="none" stroke="#fff" stroke-width="2.3"/><path d="M2342.6,185 L2360.6,188 L2360.6,204 L2342.6,202 Z M2346.8,190.3 L2356.6,192.2 L2356.6,200.6 L2346.8,199 Z M2342.6,185 L2346.5,180.5 M2360.6,188 L2364.3,184 M2360.6,204 L2364.3,200 M2342.6,202 L2342.6,202" fill="none" stroke="#fff" stroke-width="2"/><path d="M2348,198 L2355.5,198.8 L2355.5,192.8 Z" fill="#fff"/><path d="M2415,184.2 L2428.7,184.2 L2428.7,190.2 L2435,190.2 L2435,203.9 L2421,203.9 L2421,197.9 L2415,197.9 Z" fill="#fff"/><polyline points="2457.0,191.0 2463,197.0 2469.0,191.0" fill="none" stroke="#bdbdbd" stroke-width="1.6"/><path d="M2520.6,181.6 L2541.5,185.6 L2541.5,206.5 L2520.6,202.5 Z M2531.1,183.6 L2531.1,193.8 L2541.5,196" fill="none" stroke="#fff" stroke-width="2.1"/><polyline points="2562.9,190.6 2568.9,196.6 2574.9,190.6" fill="none" stroke="#bdbdbd" stroke-width="1.6"/><ellipse cx="2621" cy="186.5" rx="10.3" ry="3.2" transform="rotate(6 2621 186.5)" fill="none" stroke="#fff" stroke-width="1.9"/><ellipse cx="2621" cy="193.6" rx="10.3" ry="3.2" transform="rotate(6 2621 193.6)" fill="none" stroke="#fff" stroke-width="1.9"/><ellipse cx="2621" cy="200.8" rx="10.3" ry="3.2" transform="rotate(6 2621 200.8)" fill="none" stroke="#fff" stroke-width="1.9"/><path d="M2628,202 L2631,205" stroke="#fff" stroke-width="1.9"/><path d="M2679,187.7 L2679,199.5 L2690.7,206.2 L2703,199.5 L2703,187.7 M2690.7,181.8 L2690.7,198 M2685.5,192.7 L2690.7,198 L2696,192.7" fill="none" stroke="#fff" stroke-width="2.1"/><path d="M2734.6,193.9 L2763.6,193.9 M2748.7,179.5 L2748.7,208.5 M2738.8,189.6 L2734.6,193.9 L2738.8,198.2 M2759.4,189.6 L2763.6,193.9 L2759.4,198.2 M2744.4,183.7 L2748.7,179.5 L2753,183.7 M2744.4,204.3 L2748.7,208.5 L2753,204.3" fill="none" stroke="#fff" stroke-width="2.2"/><polyline points="2781.0,190.9 2787,196.9 2793.0,190.9" fill="none" stroke="#bdbdbd" stroke-width="1.6"/><circle cx="2841.1" cy="181.2" r="3.2" fill="none" stroke="#fff" stroke-width="2.2"/><circle cx="2851.5" cy="187" r="3.2" fill="none" stroke="#fff" stroke-width="2.2"/><circle cx="2851.5" cy="199.3" r="3.2" fill="none" stroke="#fff" stroke-width="2.2"/><circle cx="2841.1" cy="205.1" r="3.2" fill="none" stroke="#fff" stroke-width="2.2"/><circle cx="2831" cy="199.3" r="3.2" fill="none" stroke="#fff" stroke-width="2.2"/><circle cx="2831" cy="187" r="3.2" fill="none" stroke="#fff" stroke-width="2.2"/><polyline points="2873.0,190.9 2879,196.9 2885.0,190.9" fill="none" stroke="#bdbdbd" stroke-width="1.6"/></svg>
<svg style="left:0px;top:0px;" width="10" height="10" viewBox="0 0 10 10"><path d="M3265,176 Q3266.5,183.5 3274,185.5 Q3266.5,187.5 3265,195 Q3263.5,187.5 3256,185.5 Q3263.5,183.5 3265,176 Z M3277.5,192 Q3278.3,196.7 3283,197.5 Q3278.3,198.3 3277.5,203 Q3276.7,198.3 3272,197.5 Q3276.7,196.7 3277.5,192 Z" fill="none" stroke="#111" stroke-width="2.2" stroke-linejoin="round"/></svg>
<div class="r" style="left:3068px;top:1750px;width:141px;height:51px;background:transparent;border:2px solid #3a4c94;border-radius:26px"></div>
<svg style="left:0px;top:0px;" width="10" height="10" viewBox="0 0 10 10"><path d="M3094,1764 L3094,1787 M3125,1764 L3125,1787 M3094,1775.5 L3125,1775.5" fill="none" stroke="#5b7cf6" stroke-width="2.2"/></svg>
<div class="t" style="left:3142.00px;top:1765.31px;font-size:25.5px;line-height:25.5px;color:#5b7cf6;">mm</div>
<svg style="left:0px;top:0px;" width="10" height="10" viewBox="0 0 10 10"><circle cx="3131.5" cy="1911.5" r="81" fill="#1e1e1e" stroke="#3a4c94" stroke-width="2"/><line x1="3131.5" y1="1911.5" x2="3098.5" y2="1891.5" stroke="#c9c9c6" stroke-width="4"/><circle cx="3098.5" cy="1891.5" r="10" fill="#c9c9c6"/><line x1="3131.5" y1="1911.5" x2="3086.5" y2="1926" stroke="#c9c9c6" stroke-width="4"/><circle cx="3086.5" cy="1926" r="10" fill="#c9c9c6"/><line x1="3131.5" y1="1911.5" x2="3131.5" y2="1962.5" stroke="#c9c9c6" stroke-width="4"/><circle cx="3131.5" cy="1962.5" r="10" fill="#c9c9c6"/><line x1="3131.5" y1="1911.5" x2="3131.5" y2="1861" stroke="#6b8cf7" stroke-width="4"/><circle cx="3131.5" cy="1861" r="10" fill="#6b8cf7"/><line x1="3131.5" y1="1911.5" x2="3176.5" y2="1897.5" stroke="#6de07a" stroke-width="4"/><circle cx="3176.5" cy="1897.5" r="10" fill="#6de07a"/><line x1="3131.5" y1="1911.5" x2="3165" y2="1930" stroke="#e8646a" stroke-width="4"/><circle cx="3165" cy="1930" r="10" fill="#e8646a"/><polyline points="3199.0,1836.75 3205.5,1843.25 3212.0,1836.75" fill="none" stroke="#e0e0e0" stroke-width="2"/></svg>
<svg style="left:0px;top:0px;" width="10" height="10" viewBox="0 0 10 10"><path d="M134.6,2039 A18.36 18.36 0 0 1 161.2,2039 M140,2041.8 A12.05 12.05 0 0 1 155.8,2041.8" fill="none" stroke="#74d274" stroke-width="2.3" stroke-linecap="round"/><circle cx="147.9" cy="2044.8" r="3.2" fill="#74d274"/><path d="M207.3,2053.5 L207.3,2029.3 L232.7,2029.3 L232.7,2053.5 M207.3,2036.5 L232.7,2036.5 M207.3,2050.8 L232.7,2050.8 M211.2,2050.8 L211.2,2047.4 L228.8,2047.4 L228.8,2050.8 M217,2038.5 L217,2041" fill="none" stroke="#e6e6e6" stroke-width="2.1"/><rect x="214.5" y="2032.6" width="5" height="5" fill="#2e2e2e" stroke="#e6e6e6" stroke-width="2"/><path d="M522.2,2031.5 A9.8 9.8 0 1 0 531.8,2031.5 M522.9,2027.8 L531.1,2027.8 M527,2027.8 L527,2030.8 M526.8,2040.4 L532,2034.9" fill="none" stroke="#e6e6e6" stroke-width="2.1"/><path d="M589,2030.8 L590.5,2030.8 M597.5,2030.8 L609,2030.8 M589,2039.9 L598.5,2039.9 M605.3,2039.9 L609,2039.9 M589,2048.9 L596.6,2048.9 M603.4,2048.9 L609,2048.9" stroke="#e6e6e6" stroke-width="2.1" fill="none"/><circle cx="594" cy="2030.8" r="2.5" fill="none" stroke="#e6e6e6" stroke-width="1.9"/><circle cx="601.9" cy="2039.9" r="2.5" fill="none" stroke="#e6e6e6" stroke-width="1.9"/><circle cx="600" cy="2048.9" r="2.5" fill="none" stroke="#e6e6e6" stroke-width="1.9"/></svg>
<div class="t" style="left:272.00px;top:2028.00px;font-size:24.99px;line-height:24.99px;color:#e0e0e0;">v1.0.22</div>
<div class="t" style="left:385.00px;top:2028.00px;font-size:24.99px;line-height:24.99px;color:#e0e0e0;">zoo.dev</div>
<div class="t" style="left:635.00px;top:2028.00px;font-size:24.99px;line-height:24.99px;color:#e0e0e0;">Settings</div>
<div class="t" style="left:3105.00px;top:2028.00px;font-size:24.99px;line-height:24.99px;color:#e0e0e0;">1 edgeCut</div>
<div class="t" style="left:3263.00px;top:2027.56px;font-size:25.5px;line-height:25.5px;color:#e0e0e0;">?</div>
</div></div>
<div class="r" style="left:112px;top:76px;width:3196px;height:1991px;border-radius:21px;border:2px solid #5e5e5e;border-top-color:#7a7a7a;pointer-events:none"></div>
<div class="r" style="left:288px;top:76px;width:121px;height:2px;background:#8ea8f6;"></div></body></html>
